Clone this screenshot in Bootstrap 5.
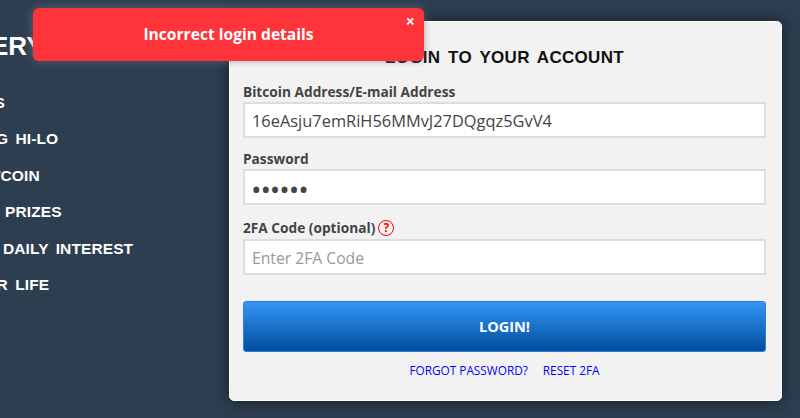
<!DOCTYPE html>
<html lang="en">
<head>
<meta charset="utf-8">
<title>Login</title>
<link href="https://cdn.jsdelivr.net/npm/bootstrap@5.3.0/dist/css/bootstrap.min.css" rel="stylesheet">
<style>
html, body { height: 100%; overflow: hidden; }
body { background: #2d3e50; font-family: "Open Sans", sans-serif; position: relative; }
.stage { height: 418px; padding-top: 21px; }
.promo { width: 229px; flex: none; overflow: hidden; font-family: "Liberation Sans", sans-serif; color: #fff; font-weight: 700; white-space: nowrap; }
.promo-head { font-size: 26px; line-height: 30px; margin-top: 10px; text-indent: -9px; }
.promo-list { list-style: none; margin: 24px 0 0; padding: 0; font-size: 15.5px; word-spacing: 3px; letter-spacing: .1px; }
.promo-list li { height: 36.4px; line-height: 36.4px; }
.promo-list li:nth-child(1) { text-indent: -5.5px; }
.promo-list li:nth-child(2) { text-indent: -4px; }
.promo-list li:nth-child(3) { text-indent: -9px; }
.promo-list li:nth-child(4) { text-indent: 5px; }
.promo-list li:nth-child(5) { text-indent: 3px; }
.promo-list li:nth-child(6) { text-indent: -3.5px; }
.login-panel { width: 553px; height: 380px; flex: none; background: #f2f2f2; border-radius: 5px; border: 1px solid #fff; box-shadow: 0 0 16px rgba(0,0,0,.55); padding: 24px 15px 0 13px; }
.login-title { font-family: "Liberation Sans", sans-serif; font-weight: 700; font-size: 17px; letter-spacing: .3px; word-spacing: 2.7px; color: #111; text-align: center; margin: 0 0 12px; line-height: 24px; }
.field-label { font-weight: 700; font-size: 13.7px; color: #444; margin: 0; line-height: 20px; }
.field-input.form-control { height: 36px; border: 2px solid #ddd; border-radius: 0; font-size: 16.4px; color: #444; padding: 0 7px; background: #fff; box-shadow: none; }
.field-input::placeholder { color: #999; opacity: 1; font-size: 15.7px; }
.field-group { margin-bottom: 11px; }
.field-group + .field-group { margin-bottom: 13px; }
.tfa-label { padding-bottom: 1px; gap: 3px; }
.pass-input.form-control { font-size: 28px; letter-spacing: -1.1px; padding-top: 3px; padding-left: 6px; }
.help-mark { display: inline-flex; align-items: center; justify-content: center; width: 16px; height: 16px; border: 1.5px solid #f00; border-radius: 50%; color: #f00; font-size: 12px; font-weight: 700; line-height: 1; }
.login-btn.btn { display: block; width: 100%; height: 51px; margin-top: 26px; border: 1px solid #2a7fd8; border-radius: 3px; background: linear-gradient(#3596f7, #004c9c); color: #fff; font-weight: 700; font-size: 14.5px; }
.login-links { gap: 15px; margin-top: 10px; font-size: 11.8px; line-height: 16px; }
.login-links a { color: #00f; text-decoration: none; }
.error-toast { position: absolute; left: 33px; top: 8px; width: 391px; height: 53px; padding-top: 1px; background: #ff333a; border-radius: 6px; color: #fff; font-weight: 700; font-size: 15.6px; box-shadow: 0 0 10px rgba(255,255,255,.3), 0 0 6px rgba(0,0,0,.4); }
.toast-close { position: absolute; right: 9px; top: 5px; background: none; border: 0; padding: 0; color: #fff; font-size: 16px; font-weight: 700; line-height: 16px; }
</style>
</head>
<body>
<div class="stage d-flex">
  <div class="promo">
    <div class="promo-head">ERY</div>
    <ul class="promo-list">
      <li>S</li>
      <li>G HI-LO</li>
      <li>TCOIN</li>
      <li>PRIZES</li>
      <li>DAILY INTEREST</li>
      <li>R LIFE</li>
    </ul>
  </div>
  <form class="login-panel">
    <h1 class="login-title">LOGIN TO YOUR ACCOUNT</h1>
    <div class="field-group">
      <label class="field-label d-block" for="addr">Bitcoin Address/E-mail Address</label>
      <input id="addr" class="form-control field-input" type="text" value="16eAsju7emRiH56MMvJ27DQgqz5GvV4">
    </div>
    <div class="field-group">
      <label class="field-label d-block" for="pw">Password</label>
      <input id="pw" class="form-control field-input pass-input" type="password" value="secret">
    </div>
    <div>
      <label class="field-label tfa-label d-flex align-items-center" for="tfa">2FA Code (optional) <span class="help-mark">?</span></label>
      <input id="tfa" class="form-control field-input" type="text" placeholder="Enter 2FA Code">
    </div>
    <button type="button" class="btn login-btn">LOGIN!</button>
    <div class="login-links d-flex justify-content-center">
      <a href="#">FORGOT PASSWORD?</a>
      <a href="#">RESET 2FA</a>
    </div>
  </form>
</div>
<div class="error-toast d-flex align-items-center justify-content-center">
  Incorrect login details
  <button type="button" class="toast-close">×</button>
</div>
<script src="https://cdn.jsdelivr.net/npm/bootstrap@5.3.0/dist/js/bootstrap.bundle.min.js"></script>
</body>
</html>
